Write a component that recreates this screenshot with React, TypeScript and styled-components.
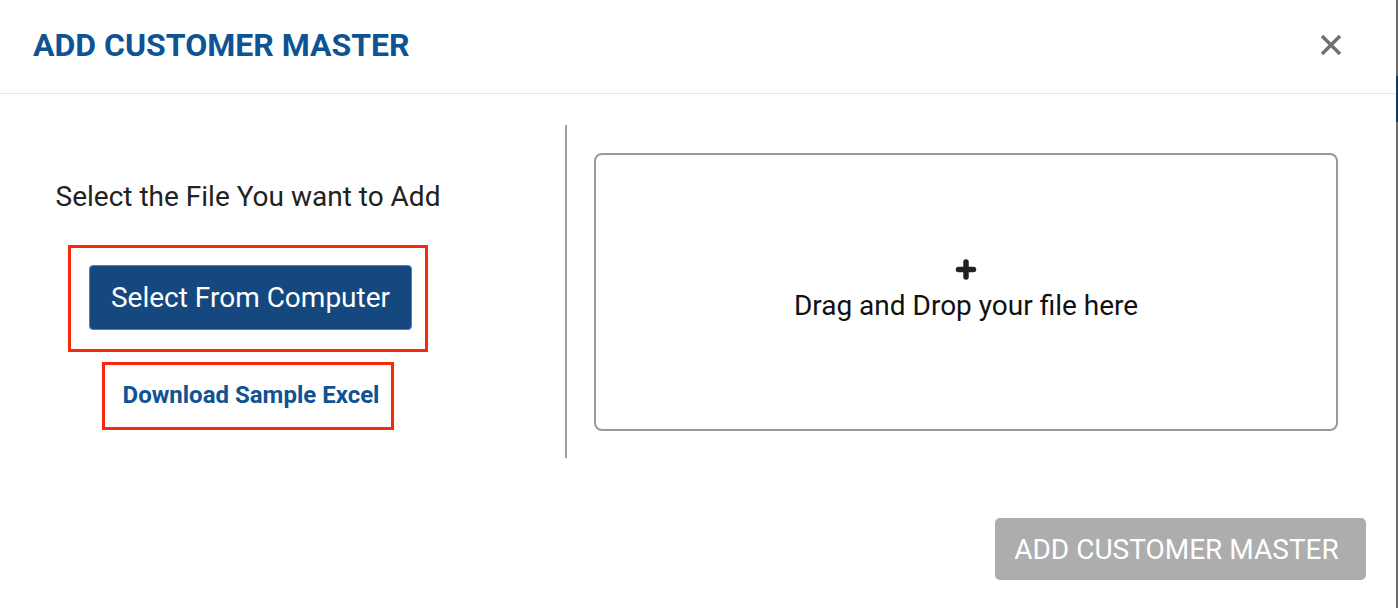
import styled, { createGlobalStyle } from 'styled-components'

const GlobalStyle = createGlobalStyle`
	html, body {
		margin: 0;
		padding: 0;
		background: #6b6b6b;
		font-family: Roboto, 'Liberation Sans', Arial, sans-serif;
	}
`

const Page = styled.div`
	display: flex;
	height: 608px;
	overflow: hidden;
`

const Modal = styled.div`
	width: 1396px;
	height: 608px;
	background: #ffffff;
	display: flex;
	flex-direction: column;
`

const Edge = styled.div`
	flex: 1;
	background: linear-gradient(
		to bottom,
		#6b6b6b 0,
		#6b6b6b 76px,
		#0f3a60 76px,
		#0f3a60 122px,
		#6b6b6b 122px
	);
`

const Header = styled.header`
	height: 94px;
	box-sizing: border-box;
	border-bottom: 1px solid #e6e6e6;
	display: flex;
	align-items: center;
	justify-content: space-between;
	padding: 0 53px 4px 33px;
`

const Title = styled.h1`
	margin: 0;
	font-size: 32px;
	font-weight: 700;
	color: #0e5394;
`

const CloseButton = styled.button`
	border: 0;
	background: none;
	padding: 0;
	width: 24px;
	height: 24px;
	display: flex;
	align-items: center;
	justify-content: center;
	cursor: pointer;
`

const Body = styled.div`
	display: flex;
	padding-top: 31px;
`

const LeftColumn = styled.div`
	width: 496px;
	display: flex;
	flex-direction: column;
	align-items: center;
	padding-top: 55px;
`

const Prompt = styled.p`
	margin: 0 0 32px;
	font-size: 28px;
	line-height: 33px;
	color: #222;
`

const Highlight = styled.div<{ $pad: string }>`
	border: 3px solid #f52a0c;
	padding: ${(p) => p.$pad};
	display: flex;
	justify-content: center;
`

const PrimaryButton = styled.button`
	width: 323px;
	height: 65px;
	background: #14487e;
	border: 1px solid #2f88ec;
	border-radius: 4px;
	color: #ffffff;
	font-family: inherit;
	font-size: 28px;
	cursor: pointer;
`

const SampleLink = styled.a`
	font-size: 24px;
	font-weight: 700;
	color: #0e5394;
	text-decoration: none;
	line-height: 28px;
`

const Divider = styled.div`
	width: 2px;
	height: 333px;
	background: #a0a0a0;
	margin-left: 69px;
`

const DropZone = styled.div`
	margin: 28px 0 0 27px;
	width: 744px;
	height: 278px;
	box-sizing: border-box;
	border: 2px solid #999;
	border-radius: 8px;
	display: flex;
	flex-direction: column;
	align-items: center;
	justify-content: center;
	gap: 9px;
	color: #111;
	font-size: 28px;
	line-height: 33px;
	padding-bottom: 4px;
`

const Footer = styled.div`
	display: flex;
	justify-content: flex-end;
	padding: 60px 30px 0 0;
`

const SubmitButton = styled.button`
	width: 371px;
	height: 62px;
	background: #adadad;
	border: 0;
	border-radius: 5px;
	color: #ffffff;
	font-family: inherit;
	font-size: 28px;
	padding: 0 8px 0 0;
`

const App = () => {
	return (
		<Page>
			<GlobalStyle />
			<Modal>
				<Header>
					<Title>ADD CUSTOMER MASTER</Title>
					<CloseButton aria-label='close'>
						<svg width='22' height='22' viewBox='0 0 22 22'>
							<path
								d='M2 2 L20 20 M20 2 L2 20'
								stroke='#707070'
								strokeWidth='3.4'
							/>
						</svg>
					</CloseButton>
				</Header>

				<Body>
					<LeftColumn>
						<Prompt>Select the File You want to Add</Prompt>
						<Highlight $pad='17px 13px 19px 18px'>
							<PrimaryButton>Select From Computer</PrimaryButton>
						</Highlight>
						<Highlight $pad='16px 12px 18px 18px' style={{ marginTop: 10 }}>
							<SampleLink href='#'>Download Sample Excel</SampleLink>
						</Highlight>
					</LeftColumn>

					<Divider />

					<DropZone>
						<svg width='22' height='21' viewBox='0 0 22 21'>
							<path
								d='M11 3 V18 M3.5 10.5 H18.5'
								stroke='#222'
								strokeWidth='5.5'
								strokeLinecap='round'
							/>
						</svg>
						<span>Drag and Drop your file here</span>
					</DropZone>
				</Body>

				<Footer>
					<SubmitButton disabled>ADD CUSTOMER MASTER</SubmitButton>
				</Footer>
			</Modal>
			<Edge />
		</Page>
	)
}

export default App
